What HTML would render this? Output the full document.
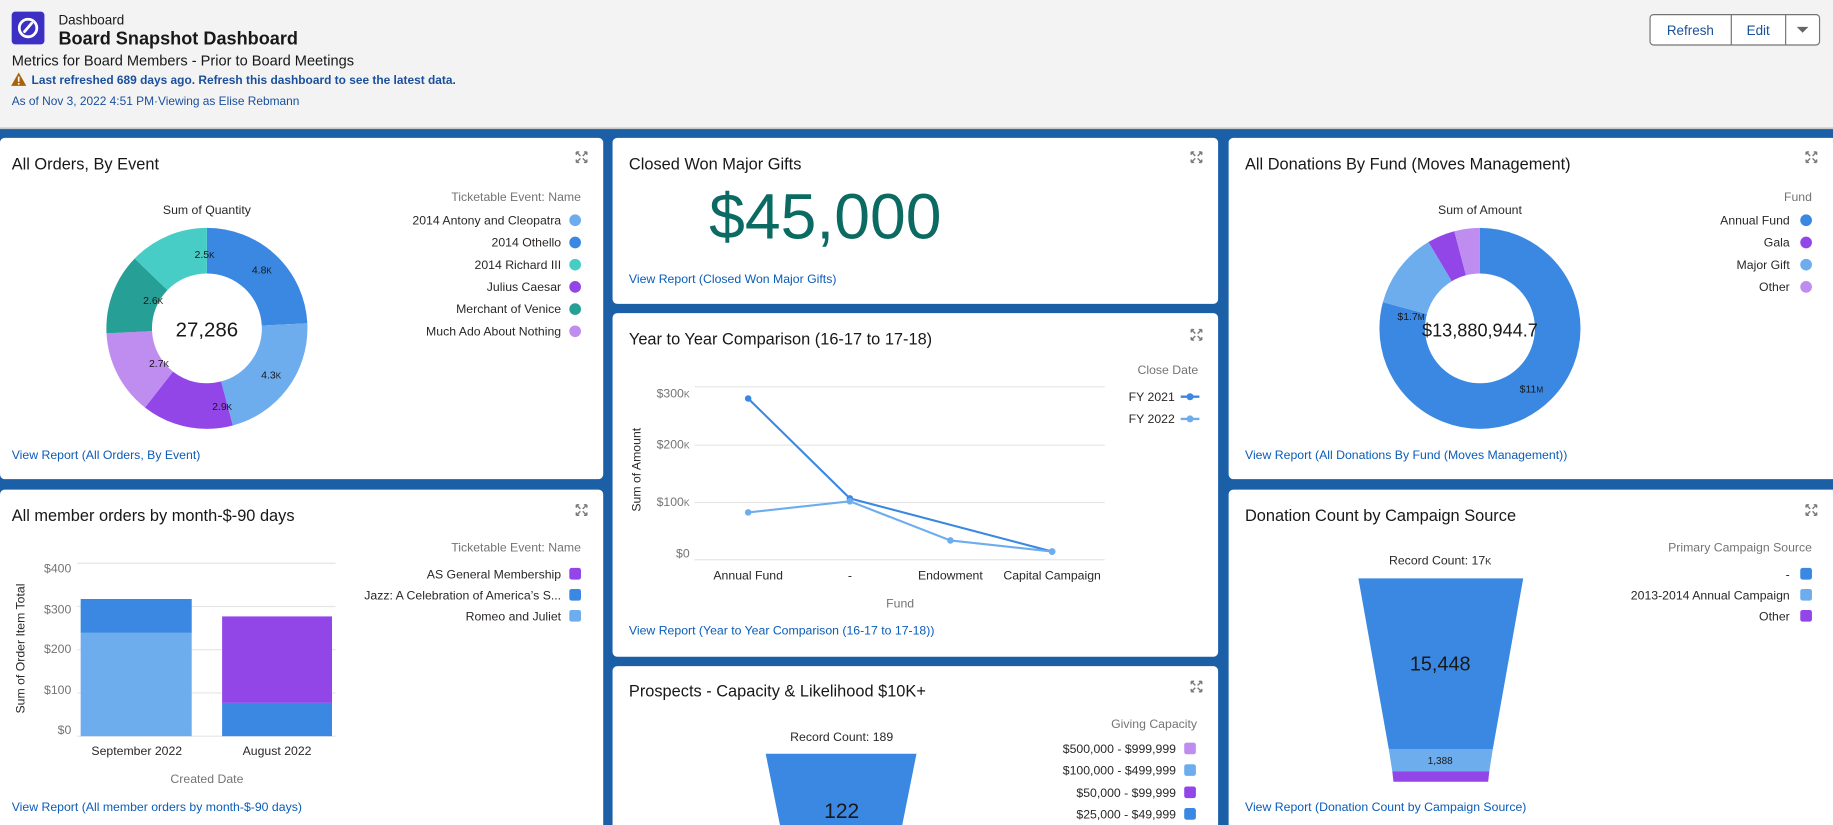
<!DOCTYPE html>
<html><head><meta charset="utf-8"><style>
html,body{margin:0;padding:0;width:1833px;height:825px;overflow:hidden;background:#1b5fa7}
svg{display:block}
text{font-family:"Liberation Sans",Arial,sans-serif}
.t{font-size:14px;fill:#181818}
.l{font-size:10.5px;fill:#2b2826}
.g{font-size:10.5px;fill:#747474}
.a{font-size:10.5px;fill:#0b5cb8}
.s{font-size:9px;fill:#181818}
</style></head><body>
<svg width="1833" height="825" viewBox="0 0 1568 706" preserveAspectRatio="none" xmlns="http://www.w3.org/2000/svg">
<defs>
<g id="exp" stroke="#7a7a7a" stroke-width="1.2" fill="none">
<path d="M0 0L3.5 3.5M0 0h2.5M0 0v2.5M9 0L5.5 3.5M9 0h-2.5M9 0v2.5M0 9L3.5 5.5M0 9h2.5M0 9v-2.5M9 9L5.5 5.5M9 9h-2.5M9 9v-2.5"/>
</g>
</defs>
<rect width="1568" height="706" fill="#1b5fa7"/>
<!-- header -->
<rect width="1568" height="110" fill="#f3f3f3"/>
<rect y="109" width="1568" height="1.5" fill="#c9c9c9"/>
<rect x="10" y="10" width="28" height="28" rx="3" fill="#3b2fc4"/>
<circle cx="24" cy="24" r="7.5" fill="none" stroke="#fff" stroke-width="2.4"/>
<path d="M21 27L27 20" stroke="#fff" stroke-width="2.4" stroke-linecap="round"/>
<text x="50" y="21" style="font-size:11.5px;fill:#181818">Dashboard</text>
<text x="50" y="38" style="font-size:15.5px;font-weight:bold;fill:#181818">Board Snapshot Dashboard</text>
<text x="10" y="56" style="font-size:12.5px;fill:#181818">Metrics for Board Members - Prior to Board Meetings</text>
<path d="M16 62L22.5 73.5H9.5Z" fill="#a9620c"/>
<rect x="15.3" y="65.5" width="1.4" height="4.5" fill="#fff"/><rect x="15.3" y="71" width="1.4" height="1.4" fill="#fff"/>
<text x="27" y="72" style="font-size:10.2px;font-weight:bold;fill:#1a4f9c">Last refreshed 689 days ago. Refresh this dashboard to see the latest data.</text>
<text x="10" y="90" style="font-size:10.2px;fill:#1a4f9c">As of Nov 3, 2022 4:51 PM·Viewing as Elise Rebmann</text>
<rect x="1411.5" y="12.5" width="145" height="26" rx="3" fill="#fff" stroke="#747474"/>
<path d="M1481 12.5v26M1527.5 12.5v26" stroke="#747474"/>
<text x="1446" y="30" text-anchor="middle" style="font-size:11.5px;fill:#1a4f9c">Refresh</text>
<text x="1504" y="30" text-anchor="middle" style="font-size:11.5px;fill:#1a4f9c">Edit</text>
<path d="M1537 23h10l-5 5z" fill="#666"/>

<!-- panels -->
<rect x="0" y="118" width="516" height="292" rx="4" fill="#fff"/>
<rect x="524" y="118" width="518" height="142" rx="4" fill="#fff"/>
<rect x="1051" y="118" width="520" height="292" rx="4" fill="#fff"/>
<rect x="524" y="268" width="518" height="294" rx="4" fill="#fff"/>
<rect x="0" y="419" width="516" height="295" rx="4" fill="#fff"/>
<rect x="524" y="570" width="518" height="145" rx="4" fill="#fff"/>
<rect x="1051" y="419" width="520" height="295" rx="4" fill="#fff"/>

<!-- Panel 1 -->
<text x="10" y="145" class="t">All Orders, By Event</text>
<use href="#exp" x="493" y="130"/>
<text x="177" y="183" text-anchor="middle" class="l">Sum of Quantity</text>
<g transform="rotate(-90 177 281)" fill="none" stroke-width="39">
<circle cx="177" cy="281" r="66.5" stroke="#3a88e2" stroke-dasharray="101 417.83" stroke-dashoffset="0"/>
<circle cx="177" cy="281" r="66.5" stroke="#6eaded" stroke-dasharray="90.5 417.83" stroke-dashoffset="-101"/>
<circle cx="177" cy="281" r="66.5" stroke="#9346e8" stroke-dasharray="61.5 417.83" stroke-dashoffset="-191.5"/>
<circle cx="177" cy="281" r="66.5" stroke="#bf8def" stroke-dasharray="56.9 417.83" stroke-dashoffset="-253"/>
<circle cx="177" cy="281" r="66.5" stroke="#26a096" stroke-dasharray="54.5 417.83" stroke-dashoffset="-309.9"/>
<circle cx="177" cy="281" r="66.5" stroke="#48cdc6" stroke-dasharray="53.4 417.83" stroke-dashoffset="-364.4"/>
</g>
<text x="177" y="288" text-anchor="middle" style="font-size:17.5px;fill:#181818">27,286</text>
<g class="s" text-anchor="middle">
<text x="224" y="234" class="s">4.8<tspan font-size="7">K</tspan></text>
<text x="232" y="324" class="s">4.3<tspan font-size="7">K</tspan></text>
<text x="190" y="351" class="s">2.9<tspan font-size="7">K</tspan></text>
<text x="136" y="314" class="s">2.7<tspan font-size="7">K</tspan></text>
<text x="131" y="260" class="s">2.6<tspan font-size="7">K</tspan></text>
<text x="175" y="221" class="s">2.5<tspan font-size="7">K</tspan></text>
</g>
<text x="497" y="172" text-anchor="end" class="g">Ticketable Event: Name</text>
<g text-anchor="end">
<text x="480" y="192" class="l">2014 Antony and Cleopatra</text>
<text x="480" y="211" class="l">2014 Othello</text>
<text x="480" y="230" class="l">2014 Richard III</text>
<text x="480" y="249" class="l">Julius Caesar</text>
<text x="480" y="268" class="l">Merchant of Venice</text>
<text x="480" y="287" class="l">Much Ado About Nothing</text>
</g>
<circle cx="492" cy="188.5" r="5" fill="#6eaded"/>
<circle cx="492" cy="207.5" r="5" fill="#3a88e2"/>
<circle cx="492" cy="226.5" r="5" fill="#48cdc6"/>
<circle cx="492" cy="245.5" r="5" fill="#9346e8"/>
<circle cx="492" cy="264.5" r="5" fill="#26a096"/>
<circle cx="492" cy="283.5" r="5" fill="#bf8def"/>
<text x="10" y="393" class="a">View Report (All Orders, By Event)</text>

<!-- Closed Won -->
<text x="538" y="145" class="t">Closed Won Major Gifts</text>
<use href="#exp" x="1019" y="130"/>
<text x="706" y="204" text-anchor="middle" style="font-size:55px;fill:#0b6b62">$45,000</text>
<text x="538" y="242" class="a">View Report (Closed Won Major Gifts)</text>

<!-- Donations by fund -->
<text x="1065" y="145" class="t">All Donations By Fund (Moves Management)</text>
<use href="#exp" x="1545" y="130"/>
<text x="1266" y="183" text-anchor="middle" class="l">Sum of Amount</text>
<g transform="rotate(-90 1266 281)" fill="none" stroke-width="39">
<circle cx="1266" cy="281" r="66.5" stroke="#3a88e2" stroke-dasharray="330.8 417.83" stroke-dashoffset="0"/>
<circle cx="1266" cy="281" r="66.5" stroke="#6eaded" stroke-dasharray="51.1 417.83" stroke-dashoffset="-330.8"/>
<circle cx="1266" cy="281" r="66.5" stroke="#9346e8" stroke-dasharray="18.6 417.83" stroke-dashoffset="-381.9"/>
<circle cx="1266" cy="281" r="66.5" stroke="#bf8def" stroke-dasharray="17.4 417.83" stroke-dashoffset="-400.5"/>
</g>
<text x="1266" y="288" text-anchor="middle" style="font-size:15.5px;fill:#181818">$13,880,944.7</text>
<text x="1207" y="274" text-anchor="middle" class="s">$1.7<tspan font-size="7">M</tspan></text>
<text x="1310" y="336" text-anchor="middle" class="s">$11<tspan font-size="7">M</tspan></text>
<text x="1550" y="172" text-anchor="end" class="g">Fund</text>
<g text-anchor="end">
<text x="1531" y="192" class="l">Annual Fund</text>
<text x="1531" y="211" class="l">Gala</text>
<text x="1531" y="230" class="l">Major Gift</text>
<text x="1531" y="249" class="l">Other</text>
</g>
<circle cx="1545" cy="188.5" r="5" fill="#3a88e2"/>
<circle cx="1545" cy="207.5" r="5" fill="#9346e8"/>
<circle cx="1545" cy="226.5" r="5" fill="#6eaded"/>
<circle cx="1545" cy="245.5" r="5" fill="#bf8def"/>
<text x="1065" y="393" class="a">View Report (All Donations By Fund (Moves Management))</text>

<!-- Year to year -->
<text x="538" y="295" class="t">Year to Year Comparison (16-17 to 17-18)</text>
<use href="#exp" x="1019" y="282"/>
<g stroke="#e5e5e5" stroke-width="1">
<path d="M594 331H945M594 381H945M594 430H945M594 479H945"/>
</g>
<g text-anchor="end" class="g">
<text x="590" y="340" class="g">$300<tspan font-size="7.5">K</tspan></text>
<text x="590" y="384" class="g">$200<tspan font-size="7.5">K</tspan></text>
<text x="590" y="433" class="g">$100<tspan font-size="7.5">K</tspan></text>
<text x="590" y="477" class="g">$0</text>
</g>
<text transform="translate(548 402) rotate(-90)" text-anchor="middle" class="l">Sum of Amount</text>
<polyline points="640,341 727,426.5 900,472" fill="none" stroke="#3a88e2" stroke-width="1.8"/>
<polyline points="640,438.5 727,429 813,462.5 900,472" fill="none" stroke="#6eaded" stroke-width="1.8"/>
<g fill="#3a88e2"><circle cx="640" cy="341" r="2.8"/><circle cx="727" cy="426.5" r="2.8"/><circle cx="900" cy="472" r="2.8"/></g>
<g fill="#6eaded"><circle cx="640" cy="438.5" r="2.8"/><circle cx="727" cy="429" r="2.8"/><circle cx="813" cy="462.5" r="2.8"/><circle cx="900" cy="472" r="2.8"/></g>
<g text-anchor="middle">
<text x="640" y="496" class="l">Annual Fund</text>
<text x="727" y="496" class="l">-</text>
<text x="813" y="496" class="l">Endowment</text>
<text x="900" y="496" class="l">Capital Campaign</text>
</g>
<text x="770" y="520" text-anchor="middle" class="g">Fund</text>
<text x="1025" y="320" text-anchor="end" class="g">Close Date</text>
<text x="1005" y="343" text-anchor="end" class="l">FY 2021</text>
<text x="1005" y="362" text-anchor="end" class="l">FY 2022</text>
<path d="M1010 339.5h16" stroke="#3a88e2" stroke-width="2"/><circle cx="1018" cy="339.5" r="3" fill="#3a88e2"/>
<path d="M1010 358.5h16" stroke="#6eaded" stroke-width="2"/><circle cx="1018" cy="358.5" r="3" fill="#6eaded"/>
<text x="538" y="543" class="a">View Report (Year to Year Comparison (16-17 to 17-18))</text>

<!-- Prospects -->
<text x="538" y="596" class="t">Prospects - Capacity &amp; Likelihood $10K+</text>
<use href="#exp" x="1019" y="583"/>
<text x="720" y="634" text-anchor="middle" class="l">Record Count: 189</text>
<path d="M655 645H784L771 710H668Z" fill="#3a88e2"/>
<text x="720" y="700" text-anchor="middle" style="font-size:18px;fill:#181818">122</text>
<text x="1024" y="623" text-anchor="end" class="g">Giving Capacity</text>
<g text-anchor="end">
<text x="1006" y="644.5" class="l">$500,000 - $999,999</text>
<text x="1006" y="663" class="l">$100,000 - $499,999</text>
<text x="1006" y="682" class="l">$50,000 - $99,999</text>
<text x="1006" y="700.5" class="l">$25,000 - $49,999</text>
</g>
<rect x="1013" y="635.5" width="10" height="10" rx="2" fill="#bf8def"/>
<rect x="1013" y="654" width="10" height="10" rx="2" fill="#6eaded"/>
<rect x="1013" y="673" width="10" height="10" rx="2" fill="#9346e8"/>
<rect x="1013" y="691.5" width="10" height="10" rx="2" fill="#3a88e2"/>

<!-- Member orders -->
<text x="10" y="446" class="t">All member orders by month-$-90 days</text>
<use href="#exp" x="493" y="432"/>
<g stroke="#e5e5e5"><path d="M66 482H287M66 519H287M66 556H287M66 593H287M66 630H287"/></g>
<g text-anchor="end">
<text x="61" y="490" class="g">$400</text>
<text x="61" y="525" class="g">$300</text>
<text x="61" y="559" class="g">$200</text>
<text x="61" y="594" class="g">$100</text>
<text x="61" y="628" class="g">$0</text>
</g>
<text transform="translate(21 555) rotate(-90)" text-anchor="middle" class="l">Sum of Order Item Total</text>
<rect x="69" y="512.6" width="95" height="29" fill="#3a88e2"/>
<rect x="69" y="541.6" width="95" height="88.4" fill="#6eaded"/>
<rect x="190" y="527.5" width="94" height="74" fill="#9346e8"/>
<rect x="190" y="601.5" width="94" height="28.5" fill="#3a88e2"/>
<text x="117" y="646" text-anchor="middle" class="l">September 2022</text>
<text x="237" y="646" text-anchor="middle" class="l">August 2022</text>
<text x="177" y="670" text-anchor="middle" class="g">Created Date</text>
<text x="497" y="472" text-anchor="end" class="g">Ticketable Event: Name</text>
<g text-anchor="end">
<text x="480" y="495" class="l">AS General Membership</text>
<text x="480" y="513" class="l">Jazz: A Celebration of America’s S...</text>
<text x="480" y="531" class="l">Romeo and Juliet</text>
</g>
<rect x="487" y="486" width="10" height="10" rx="2" fill="#9346e8"/>
<rect x="487" y="504" width="10" height="10" rx="2" fill="#3a88e2"/>
<rect x="487" y="522" width="10" height="10" rx="2" fill="#6eaded"/>
<text x="10" y="694" class="a">View Report (All member orders by month-$-90 days)</text>

<!-- Donation count -->
<text x="1065" y="446" class="t">Donation Count by Campaign Source</text>
<use href="#exp" x="1545" y="432"/>
<text x="1232" y="483" text-anchor="middle" class="l">Record Count: 17<tspan font-size="8">K</tspan></text>
<path d="M1162 495H1303L1277 641H1188Z" fill="#3a88e2"/>
<path d="M1188 641H1277L1274 660H1191Z" fill="#6eaded"/>
<path d="M1191 660H1274L1273 669H1192Z" fill="#9346e8"/>
<text x="1232" y="574" text-anchor="middle" style="font-size:17px;fill:#181818">15,448</text>
<text x="1232" y="654" text-anchor="middle" style="font-size:8.5px;fill:#181818">1,388</text>
<text x="1550" y="472" text-anchor="end" class="g">Primary Campaign Source</text>
<g text-anchor="end">
<text x="1531" y="495" class="l">-</text>
<text x="1531" y="513" class="l">2013-2014 Annual Campaign</text>
<text x="1531" y="531" class="l">Other</text>
</g>
<rect x="1540" y="486" width="10" height="10" rx="2" fill="#3a88e2"/>
<rect x="1540" y="504" width="10" height="10" rx="2" fill="#6eaded"/>
<rect x="1540" y="522" width="10" height="10" rx="2" fill="#9346e8"/>
<text x="1065" y="694" class="a">View Report (Donation Count by Campaign Source)</text>
</svg>
</body></html>
